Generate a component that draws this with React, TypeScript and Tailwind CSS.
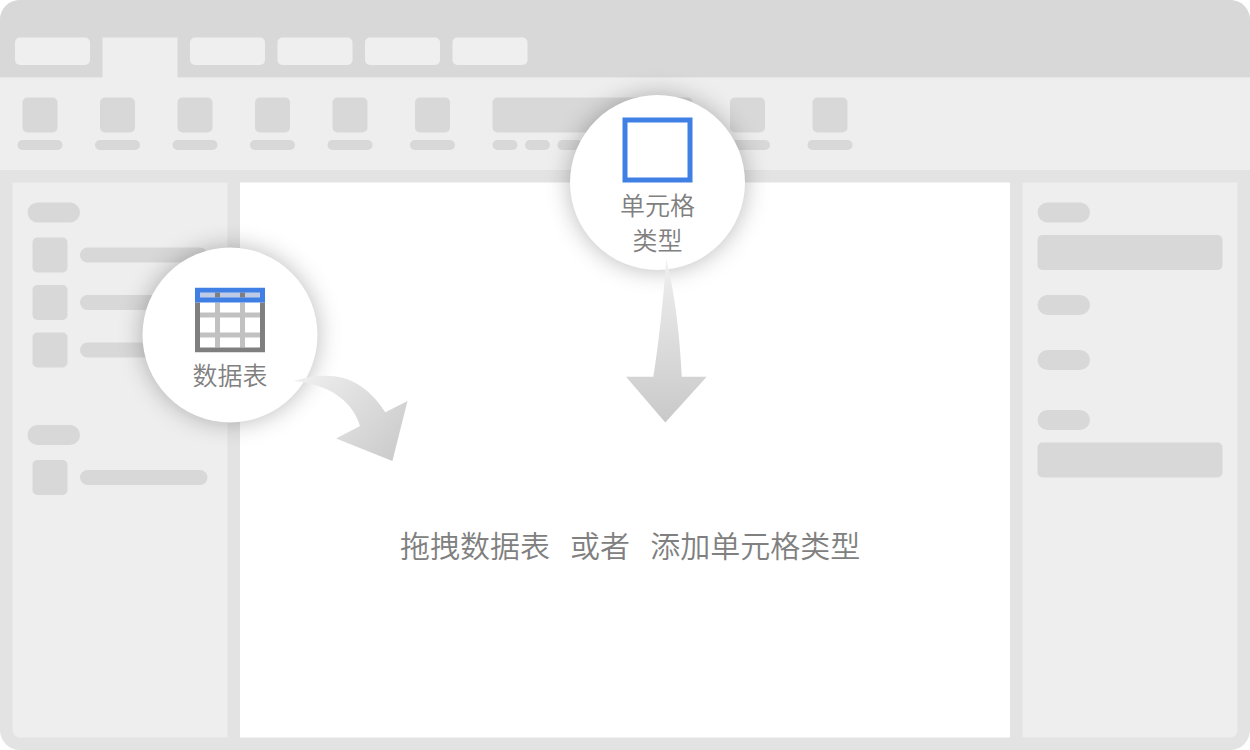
import type { ReactNode } from "react";

// The illustration is laid out on a 500 x 300 grid and enlarged 2.5 times.

const Tab = () => <div className="h-[11px] w-[30px] rounded-[2px] bg-[#efefef]" />;

const Square = () => <div className="size-[14px] shrink-0 rounded-[2px] bg-[#d8d8d8]" />;

const Pill = () => <div className="h-[8px] w-[21px] rounded-full bg-[#d8d8d8]" />;

const Field = () => <div className="h-[14px] w-[74px] rounded-[2px] bg-[#d8d8d8]" />;

const Tool = () => (
  <div className="flex w-[18px] flex-col items-center gap-[3px]">
    <Square />
    <div className="h-[4px] w-full rounded-full bg-[#d8d8d8]" />
  </div>
);

const ListRow = () => (
  <div className="flex items-center gap-[5px] pl-[2px]">
    <Square />
    <div className="h-[6px] w-[51px] rounded-full bg-[#d8d8d8]" />
  </div>
);

const Bubble = ({ className, children }: { className: string; children: ReactNode }) => (
  <div
    className={`absolute flex size-[70px] flex-col items-center rounded-full bg-white text-[10px] leading-[14px] text-[#808080] shadow-[0_0_10px_rgba(0,0,0,0.28)] ${className}`}
  >
    {children}
  </div>
);

const TableIcon = () => (
  <svg viewBox="0 0 28 26" className="h-[26px] w-[28px] shrink-0">
    <path d="M2 11H26M2 19H26M9 6V24M19 6V24" stroke="#c1c1c1" strokeWidth="2" fill="none" />
    <path d="M1 6V25H27V6" stroke="#7f7f7f" strokeWidth="2" fill="none" />
    <rect x="1" y="1" width="26" height="4" fill="#bfcae6" />
    <path d="M9 2V4M19 2V4" stroke="#7f7f7f" strokeWidth="2" />
    <rect x="1" y="1" width="26" height="4" stroke="#4080e5" strokeWidth="2" fill="none" />
  </svg>
);

const Arrows = () => (
  <svg viewBox="0 0 1250 750" className="pointer-events-none absolute inset-0 h-[300px] w-[500px]">
    <defs>
      <linearGradient id="curved" gradientUnits="userSpaceOnUse" x1="303" y1="366" x2="401" y2="453">
        <stop offset="0" stopColor="#f0f0f0" />
        <stop offset="1" stopColor="#cbcbcb" />
      </linearGradient>
      <linearGradient id="straight" gradientUnits="userSpaceOnUse" x1="660" y1="259" x2="670" y2="422">
        <stop offset="0" stopColor="#f0f0f0" />
        <stop offset="1" stopColor="#c9c9c9" />
      </linearGradient>
    </defs>
    <path
      d="M293.5 381C336 368 364 379 385.3 412.3L407.5 401L392.4 461L336 438.5L360 426C353 402 330 384 293.5 381Z"
      fill="url(#curved)"
    />
    <path
      d="M666.3 259C675 295 680 336 681.7 376.7H706.7L665.3 422.5L626 376.7H653.3C659 342 663 302 666.3 259Z"
      fill="url(#straight)"
    />
  </svg>
);

export default function App() {
  return (
    <div className="h-[750px] w-[1250px] overflow-hidden bg-white">
      <div className="relative flex h-[300px] w-[500px] origin-top-left scale-[2.5] flex-col overflow-hidden rounded-[8px] bg-[#e3e3e3] font-['Noto_Sans_CJK_SC',sans-serif] font-[350]">
        <header className="flex h-[31px] gap-[5px] bg-[#d8d8d8] pt-[15px] pl-[6px]">
          <Tab />
          <div className="relative z-10 h-[18px] w-[30px] bg-[#eeeeee]" />
          <Tab />
          <Tab />
          <Tab />
          <Tab />
        </header>

        <div className="flex h-[37px] bg-[#eeeeee] pt-[8px] pl-[7px]">
          <div className="flex gap-[13px]">
            <Tool />
            <Tool />
            <Tool />
            <Tool />
            <Tool />
          </div>
          <div className="ml-[15px]">
            <Tool />
          </div>
          <div className="ml-[15px] flex w-[80px] flex-col gap-[3px]">
            <div className="h-[14px] rounded-[2px] bg-[#d8d8d8]" />
            <div className="flex gap-[3px]">
              <div className="h-[4px] w-[10px] rounded-full bg-[#d8d8d8]" />
              <div className="h-[4px] w-[10px] rounded-full bg-[#d8d8d8]" />
              <div className="h-[4px] w-[10px] rounded-full bg-[#d8d8d8]" />
            </div>
          </div>
          <div className="ml-[13px] flex gap-[15px]">
            <Tool />
            <Tool />
          </div>
        </div>

        <main className="flex flex-1 gap-[5px] p-[5px]">
          <aside className="flex w-[86px] flex-col rounded-bl-[3px] bg-[#eeeeee] pt-[8px] pl-[6px]">
            <Pill />
            <div className="mt-[6px] flex flex-col gap-[5px]">
              <ListRow />
              <ListRow />
              <ListRow />
            </div>
            <div className="mt-[23px] flex flex-col gap-[6px]">
              <Pill />
              <ListRow />
            </div>
          </aside>

          <section className="w-[308px] bg-white pt-[136px] pl-[64px]">
            <p className="-translate-y-[0.4px] text-[12px] leading-[18px] whitespace-pre text-[#808080]">
              {"拖拽数据表   或者   添加单元格类型"}
            </p>
          </section>

          <aside className="flex w-[86px] flex-col rounded-br-[3px] bg-[#eeeeee] pt-[8px] pl-[6px]">
            <Pill />
            <div className="mt-[5px] mb-[10px]">
              <Field />
            </div>
            <Pill />
            <div className="mt-[14px] mb-[16px]">
              <Pill />
            </div>
            <Pill />
            <div className="mt-[5px]">
              <Field />
            </div>
          </aside>
        </main>

        <Bubble className="top-[99px] left-[57px] pt-[16px]">
          <TableIcon />
          <span className="mt-[2px]">数据表</span>
        </Bubble>

        <Bubble className="top-[38px] left-[228px] pt-[9px]">
          <div className="h-[26px] w-[28px] shrink-0 border-2 border-[#4080e5]" />
          <span className="mt-[2px]">单元格</span>
          <span>类型</span>
        </Bubble>

        <Arrows />
      </div>
    </div>
  );
}
